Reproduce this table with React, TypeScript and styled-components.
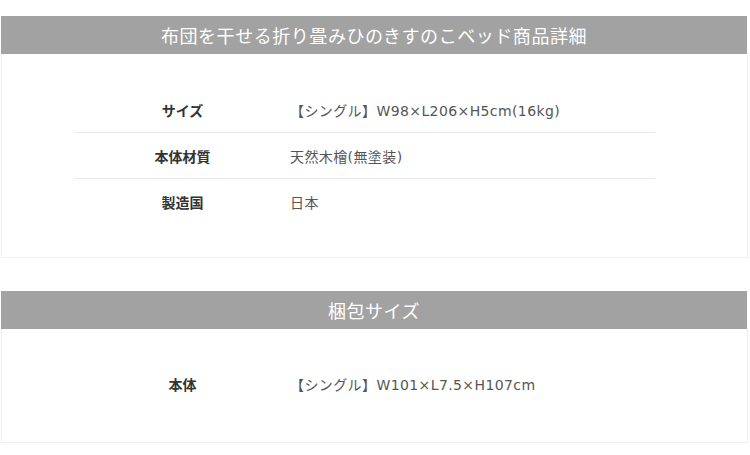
import React from "react";
import styled, { createGlobalStyle } from "styled-components";

const GlobalStyle = createGlobalStyle`
  html, body { margin: 0; padding: 0; background: #ffffff; }
  body {
    font-family: "Noto Sans CJK JP", "Noto Sans", "Liberation Sans", sans-serif;
    width: 750px;
  }
`;

const Page = styled.div`
  display: flex;
  flex-direction: column;
  gap: 33px;
  padding: 16px 2px 0 1px;
`;

const Section = styled.section`
  display: flex;
  flex-direction: column;
`;

const Header = styled.h2`
  margin: 0;
  height: 38px;
  margin-right: 1px;
  background: #a2a2a2;
  color: #ffffff;
  font-size: 18px;
  font-weight: 400;
  line-height: 38px;
  text-align: center;
  letter-spacing: 0.55px;
`;

const Body = styled.div<{ $pt: number; $pb: number }>`
  border: 1px solid #efefef;
  border-top: none;
  padding: ${(p) => p.$pt}px 0 ${(p) => p.$pb}px 73px;
`;

const Table = styled.div`
  width: 580px;
  display: flex;
  flex-direction: column;
`;

const Row = styled.div<{ $divider: boolean }>`
  display: grid;
  grid-template-columns: 215px 1fr;
  align-items: center;
  height: 46px;
  border-bottom: ${(p) => (p.$divider ? "1px solid #e9e9e9" : "none")};
  box-sizing: border-box;
`;

const Label = styled.div`
  text-align: center;
  font-size: 14px;
  font-weight: 700;
  color: #333333;
`;

const Value = styled.div`
  font-family: "DejaVu Sans", "Noto Sans CJK JP", sans-serif;
  font-size: 14px;
  letter-spacing: 0.4px;
  color: #555555;
`;

type Spec = { label: string; value: string };

const detail: Spec[] = [
  { label: "サイズ", value: "【シングル】W98×L206×H5cm(16kg)" },
  { label: "本体材質", value: "天然木檜(無塗装)" },
  { label: "製造国", value: "日本" },
];

const pack: Spec[] = [{ label: "本体", value: "【シングル】W101×L7.5×H107cm" }];

function SpecSection({
  title,
  rows,
  pt,
  pb,
}: {
  title: string;
  rows: Spec[];
  pt: number;
  pb: number;
}) {
  return (
    <Section>
      <Header>{title}</Header>
      <Body $pt={pt} $pb={pb}>
        <Table>
          {rows.map((r, i) => (
            <Row key={r.label} $divider={i < rows.length - 1}>
              <Label>{r.label}</Label>
              <Value>{r.value}</Value>
            </Row>
          ))}
        </Table>
      </Body>
    </Section>
  );
}

export default function App() {
  return (
    <>
      <GlobalStyle />
      <Page>
        <SpecSection
          title="布団を干せる折り畳みひのきすのこベッド商品詳細"
          rows={detail}
          pt={33}
          pb={32}
        />
        <SpecSection title="梱包サイズ" rows={pack} pt={32} pb={35} />
      </Page>
    </>
  );
}
